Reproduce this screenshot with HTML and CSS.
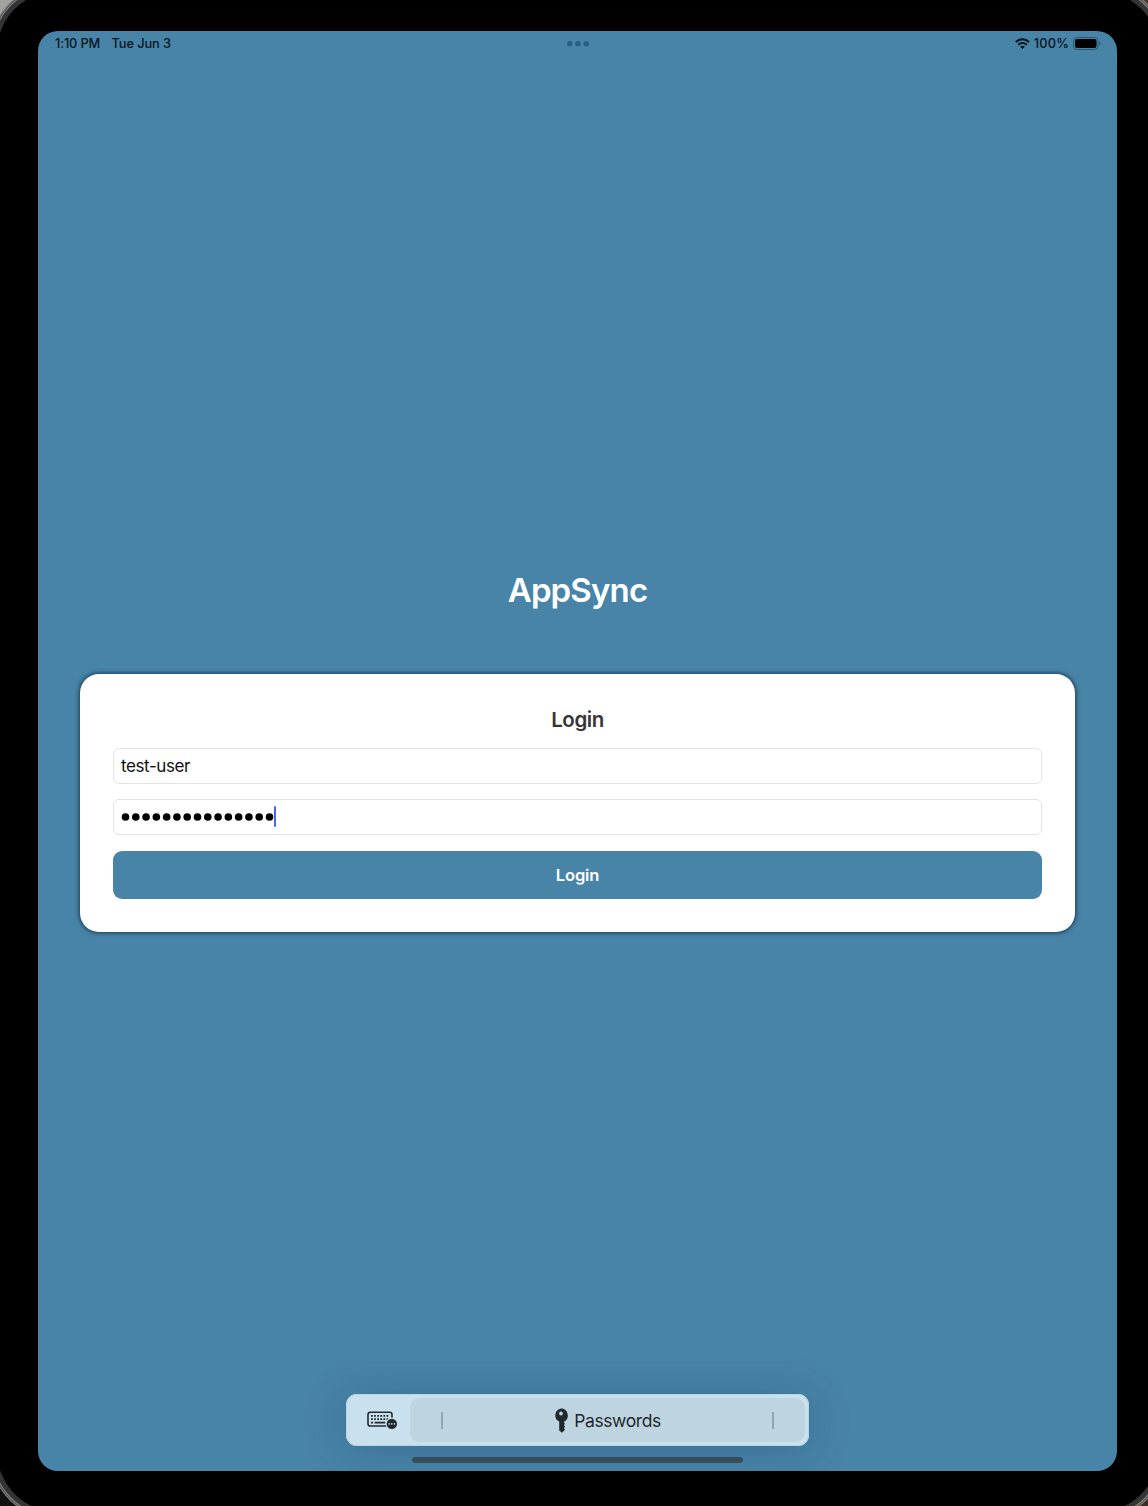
FILE: index.html
```html
<!DOCTYPE html>
<html lang="en">
<head>
<meta charset="utf-8">
<title>AppSync</title>
<link rel="stylesheet" href="styles.css">
</head>
<body>
<div class="device">
  <main class="screen">
    <header class="status">
      <div class="status-side"><span class="time">1:10 PM</span><span class="date">Tue Jun 3</span></div>
      <svg class="dots" width="23" height="6" viewBox="0 0 23 6" fill="#285f85"><circle cx="2.700" cy="2.800" r="2.700"/><circle cx="11" cy="2.800" r="2.700"/><circle cx="19.300" cy="2.800" r="2.700"/></svg>
      <div class="status-side status-right">
        <svg class="wifi" width="15" height="11" viewBox="0 0 15 11" fill="none" stroke="#07141c" stroke-width="2"><path d="M.8 4.100C4.600.3 10.400.3 14.200 4.100M3.200 6.800c2.500-2.400 6.100-2.400 8.600 0"/><path fill="#07141c" stroke="none" d="M5.100 8.700c1.400-1.200 3.400-1.200 4.800 0L7.500 11z"/></svg>
        <span class="percent">100%</span>
        <svg class="battery" width="28" height="13" viewBox="0 0 28 13"><rect x=".5" y=".5" width="24.500" height="12" rx="3.600" fill="none" stroke="#2c5871"/><rect x="2" y="2" width="21.500" height="9" rx="2.200" fill="#000"/><path d="M26.200 4.500c1.700.7 1.700 3.300 0 4z" fill="#2c5871"/></svg>
      </div>
    </header>
    <h1 class="title">AppSync</h1>
    <section class="card">
      <h2 class="card-title">Login</h2>
      <div class="field"><span class="user">test-user</span></div>
      <div class="field password">
        <svg width="153" height="8" viewBox="0 0 153 8"><path d="M4.500 4h144.600" stroke="#000" stroke-width="7.600" stroke-linecap="round" stroke-dasharray="0 10.286"/></svg><span class="caret"></span>
      </div>
      <button class="login"><span>Login</span></button>
    </section>
    <div class="toolbar">
      <svg class="keyboard" width="31" height="20" viewBox="0 0 31 20"><rect x="1" y="2.200" width="24" height="13.800" rx="2.300" fill="none" stroke="#22292e" stroke-width="1.600"/><g stroke="#22292e" stroke-width="1.800" stroke-dasharray="1.800 1.300"><path d="M4 5.900h18.500M4 9.100h18.500"/></g><path d="M4 12.600h2M7.500 12.600h11M20 12.600h2" stroke="#22292e" stroke-width="1.700"/><circle cx="24.800" cy="13.900" r="6.300" fill="#c9e1ee"/><circle cx="24.800" cy="13.900" r="5.200" fill="#22292e"/><g fill="#c9e1ee"><circle cx="22.200" cy="13.900" r=".8"/><circle cx="24.800" cy="13.900" r=".8"/><circle cx="27.400" cy="13.900" r=".8"/></g></svg>
      <div class="suggestions">
        <span class="divider"></span>
        <div class="passwords">
          <svg width="14" height="25" viewBox="0 0 14 25"><path fill="#22292e" fill-rule="evenodd" d="M7 .6a6.900 6.900 0 0 1 2.900 13.100v.8l1.100 1.300-1.100 1.500 1.300 1.500-1.300 1.300 1.100 1.700-3 3-2.800-2.300v-8.900A6.900 6.900 0 0 1 7 .6zm0 3a1.900 1.900 0 1 0 0 3.800 1.900 1.900 0 0 0 0-3.800z"/></svg>
          <span>Passwords</span>
        </div>
        <span class="divider"></span>
      </div>
    </div>
    <div class="home"></div>
  </main>
</div>
</body>
</html>
```
FILE: styles.css
```css
* { box-sizing: border-box; }
html { height: 100%; overflow: hidden; }
body {
  margin: 0;
  height: 1506px;
  display: flow-root;
  overflow: hidden;
  font-family: Inter, "Liberation Sans", sans-serif;
  background:
    linear-gradient(#a2a29f, #a2a29f) 0 0 / 60px 60px no-repeat,
    linear-gradient(#46382f, #46382f) 100% 0 / 60px 60px no-repeat,
    linear-gradient(#3a3025, #3a3025) 100% 100% / 60px 60px no-repeat,
    #101010;
}
.device {
  width: 1162px;
  height: 1521px;
  margin: -9px -3px;
  padding: 40px 42px 41px 41px;
  background: #000;
  border-radius: 61px;
  box-shadow: 0 0 0 5px #343434, 0 0 0 6px #8a8a8a, 0 0 0 7px #4a4a4a, 0 0 0 8px #858585;
}
.screen {
  height: 1440px;
  border-radius: 20px;
  background: #4884a8;
  display: flex;
  flex-direction: column;
  align-items: center;
  overflow: hidden;
}
.status {
  align-self: stretch;
  height: 25px;
  padding: 0 16px 0 17px;
  display: grid;
  grid-template-columns: 1fr auto 1fr;
  align-items: center;
  color: #07141c;
  font-size: 12.800px;
  font-weight: 500;
  line-height: 15px;
  white-space: nowrap;
}
.status-side { display: flex; align-items: center; }
.status-side span { padding-bottom: 1px; }
.status-right { justify-content: flex-end; }
.time { width: 56.500px; letter-spacing: -.15px; }
.date { letter-spacing: -.08px; }
.percent { margin: 0 4px; letter-spacing: .15px; }
.title {
  margin: 511px 0 0;
  height: 46px;
  line-height: 46px;
  color: #fff;
  font-size: 33px;
  font-weight: 600;
  letter-spacing: -.85px;
}
.card {
  width: 995px;
  height: 258px;
  margin-top: 61px;
  padding: 31px 33px 33px;
  border-radius: 19px;
  background: #fff;
  box-shadow: 0 0 4px 1px rgba(0, 24, 42, .68);
  display: flex;
  flex-direction: column;
}
.card-title {
  margin: 0 0 13px;
  line-height: 30px;
  text-align: center;
  color: #363636;
  font-size: 20.500px;
  font-weight: 600;
  letter-spacing: -.45px;
}
.field {
  height: 36px;
  margin-bottom: 15.500px;
  padding: 0 7px;
  border: 1px solid #e3e3e4;
  border-radius: 6px;
  display: flex;
  align-items: center;
  font-size: 17px;
  letter-spacing: -.4px;
  color: #111;
}
.password { margin: -.5px 0 16px; }
.caret { width: 2px; height: 21px; margin-bottom: 2px; background: #4968e8; border-radius: 1px; }
.login {
  height: 48px;
  flex: none;
  border: 0;
  padding: 0 0 1px;
  border-radius: 9px;
  background: #4884a8;
  color: #fff;
  font: 600 16.500px Inter, sans-serif;
  letter-spacing: -.15px;
}
.toolbar {
  width: 463px;
  height: 52px;
  margin-top: 462px;
  padding: 4px 4px 4px 21px;
  border-radius: 11px;
  background: #c9e1ee;
  box-shadow: 0 3px 40px rgba(20, 55, 80, .28), inset 0 0 0 1px #b7d5e4;
  display: flex;
  align-items: center;
  justify-content: space-between;
}
.suggestions {
  width: 395px;
  height: 44px;
  padding: 0 31px;
  border-radius: 10px;
  background: #bfd4e1;
  display: flex;
  align-items: center;
  justify-content: space-between;
}
.divider { width: 1.500px; height: 17px; background: #93a5b1; }
.passwords { display: flex; align-items: center; gap: 6px; color: #1f272d; font-size: 17.500px; letter-spacing: -.4px; }
.home { width: 331px; height: 6px; margin-top: 11px; border-radius: 3px; background: #374d5c; }
```
